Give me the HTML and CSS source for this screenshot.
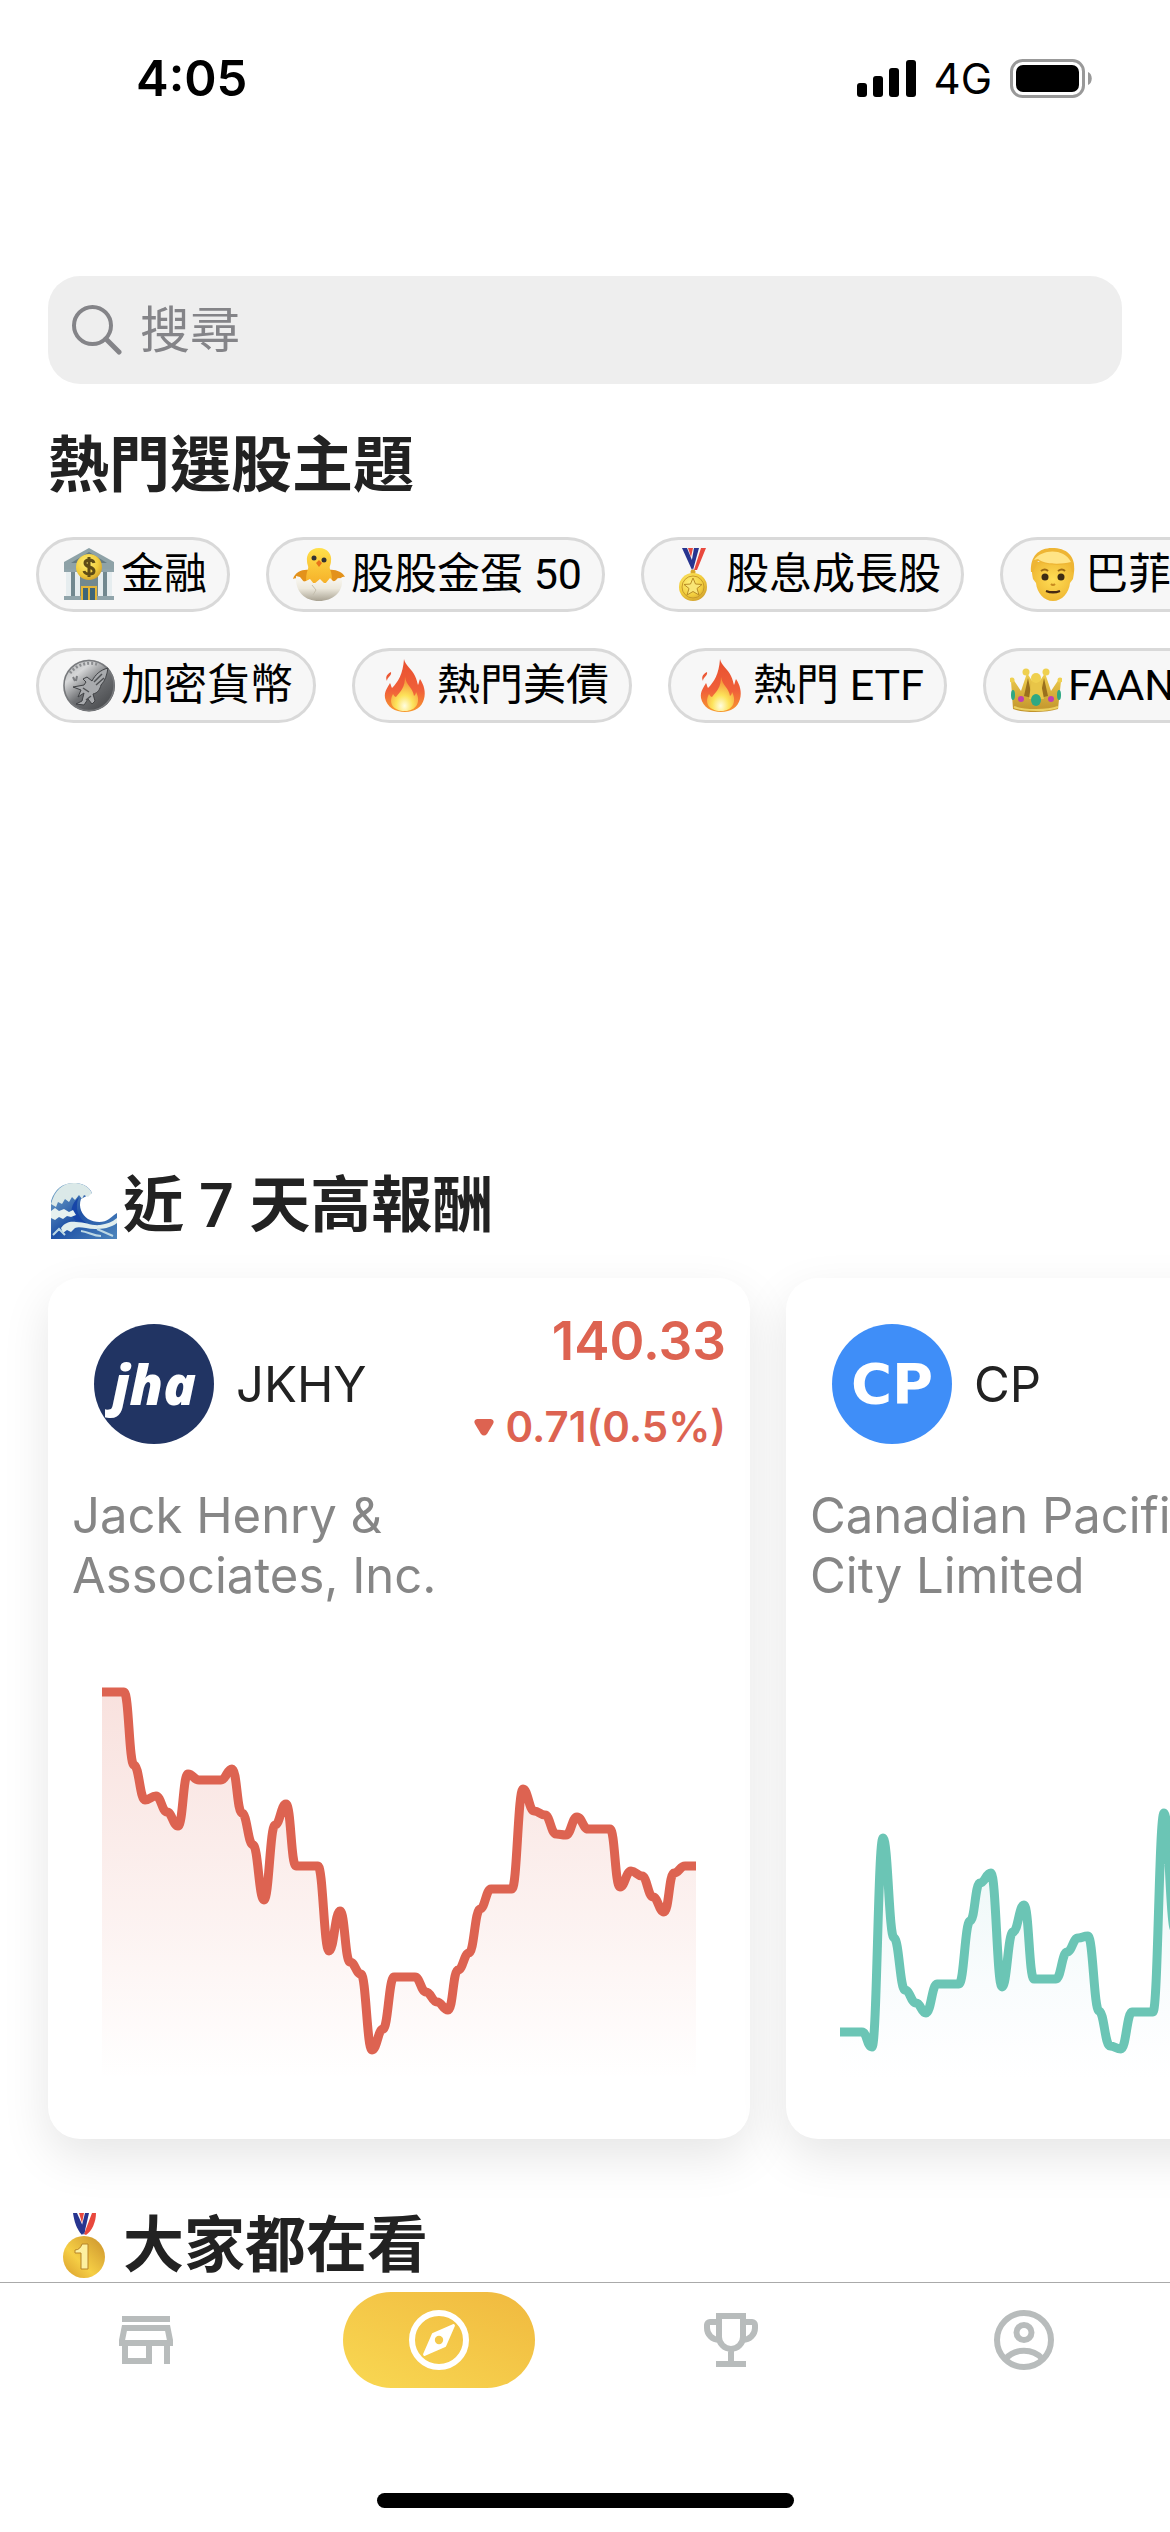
FILE: index.html
```html
<!DOCTYPE html>
<html lang="zh-Hant">
<head>
<meta charset="utf-8">
<meta name="viewport" content="width=device-width, initial-scale=1">
<title>探索</title>
<link rel="stylesheet" href="styles.css">
</head>
<body>
<svg class="defs" aria-hidden="true">
  <defs>
    <linearGradient id="flameOuter" x1="0" y1="0" x2="0" y2="1"><stop offset="0" stop-color="#e8502f"/><stop offset=".6" stop-color="#f0603a"/><stop offset="1" stop-color="#f79a2e"/></linearGradient>
    <radialGradient id="flameInner" cx=".5" cy=".85" r=".7"><stop offset="0" stop-color="#fffde0"/><stop offset=".45" stop-color="#fde35a"/><stop offset="1" stop-color="#f59a3c"/></radialGradient>
    <radialGradient id="gold" cx=".4" cy=".35" r=".75"><stop offset="0" stop-color="#fff07a"/><stop offset=".6" stop-color="#f2cd3c"/><stop offset="1" stop-color="#c9962a"/></radialGradient>
    <linearGradient id="medalGold" x1="0" y1="1" x2="1" y2="0"><stop offset="0" stop-color="#d79a2b"/><stop offset=".4" stop-color="#f6cf45"/><stop offset="1" stop-color="#c98f2c"/></linearGradient>
    <linearGradient id="silver" x1="0" y1="0" x2=".8" y2="1"><stop offset="0" stop-color="#a9abad"/><stop offset=".3" stop-color="#d6d7d8"/><stop offset=".6" stop-color="#6d6f72"/><stop offset="1" stop-color="#46484b"/></linearGradient>
    <radialGradient id="face" cx=".5" cy=".45" r=".6"><stop offset="0" stop-color="#ffdd55"/><stop offset="1" stop-color="#eeb531"/></radialGradient>
    <linearGradient id="chick" x1="0" y1="0" x2="0" y2="1"><stop offset="0" stop-color="#ffe04a"/><stop offset="1" stop-color="#f6b12a"/></linearGradient>
    <linearGradient id="shell" x1="0" y1="0" x2="0" y2="1"><stop offset="0" stop-color="#fbfaf5"/><stop offset=".5" stop-color="#ece8dc"/><stop offset="1" stop-color="#a9a393"/></linearGradient>
    <linearGradient id="crownGold" x1="0" y1="0" x2="0" y2="1"><stop offset="0" stop-color="#f0cf4e"/><stop offset="1" stop-color="#c1932c"/></linearGradient>
    <linearGradient id="waveBlue" x1="0" y1="0" x2="1" y2="1"><stop offset="0" stop-color="#7fb0cc"/><stop offset=".5" stop-color="#1f52a6"/><stop offset="1" stop-color="#4d86bd"/></linearGradient>
    <linearGradient id="fallFill" x1="0" y1="0" x2="0" y2="1"><stop offset="0" stop-color="#dd6351" stop-opacity=".19"/><stop offset=".6" stop-color="#dd6351" stop-opacity=".08"/><stop offset="1" stop-color="#dd6351" stop-opacity="0"/></linearGradient>
    <linearGradient id="riseFill" x1="0" y1="0" x2="0" y2="1"><stop offset="0" stop-color="#6bc5b5" stop-opacity=".16"/><stop offset=".6" stop-color="#8ccbd6" stop-opacity=".06"/><stop offset="1" stop-color="#a0c8f0" stop-opacity="0"/></linearGradient>
    <symbol id="fire" viewBox="0 0 52 53">
      <path d="M25 0c1 6 8 10 11 17 2 4 2 6 3 9 1-2 1-4 2-6 4 6 6 13 4 20-2 8-9 13-19 13S8 48 6 39c-1-7 3-11 5-15 1 2 1 3 2 5 6-6 11-14 12-29zM12 13c1 4-4 5-4 9-2-4 0-7 4-9z" fill="url(#flameOuter)"/>
      <path d="M26 18c1 8 8 11 9 19 1-1 2-2 2-4 5 9 1 19-11 19S9 44 14 35c1 2 2 3 3 3 5-6 9-10 9-20z" fill="url(#flameInner)"/>
    </symbol>
  </defs>
</svg>

<header class="status">
  <time class="status-time">4:05</time>
  <div class="status-right">
    <svg class="signal" viewBox="0 0 59 37" aria-hidden="true"><rect y="23" width="10" height="14" rx="3"/><rect x="16" y="16" width="10" height="21" rx="3"/><rect x="32" y="8" width="10" height="29" rx="3"/><rect x="49" width="10" height="37" rx="3"/></svg>
    <span>4G</span>
    <svg class="battery" viewBox="0 0 82 39" aria-hidden="true"><rect x="1.5" y="1.5" width="72" height="36" rx="11" fill="none" stroke="#999" stroke-width="3"/><rect x="6" y="6" width="63" height="27" rx="7"/><path d="M78 13c5 2 5 11 0 13z" fill="#999"/></svg>
  </div>
</header>

<main class="content">
  <label class="search">
    <svg class="search-icon" viewBox="0 0 50 50" aria-hidden="true"><circle cx="20.500" cy="20.500" r="18.500" /><path d="M34 34l13 13"/></svg>
    <input type="search" placeholder="搜尋" aria-label="搜尋">
  </label>

  <section class="themes">
    <h2 class="heading">熱門選股主題</h2>
    <div class="chip-rows">
      <div class="chip-row">
        <button class="chip" type="button">
          <svg class="emoji" viewBox="0 0 52 53" aria-hidden="true"><path d="M26 0L51 14v8H1v-8z" fill="#8ea2a7"/><path d="M26 4l18 11H8z" fill="#667b81"/><rect x="3" y="22" width="46" height="27" fill="#71888f"/><path d="M3 23h5v26H3zM12 23h5v26h-5zM35 23h5v26h-5zM44 23h5v26h-5z" fill="#e6edef"/><path d="M1 21h50v3H1zM1 48h50v4H1z" fill="#90a4aa"/><rect x="18" y="38" width="16" height="14" fill="#e2b53a"/><path d="M20 40h5v12h-5zM27 40h5v12h-5z" fill="#3e6578"/><circle cx="26" cy="19" r="13" fill="url(#gold)"/><path d="M31 15c-1-4-9-4-9 0 0 5 9 3 9 8 0 4-9 4-10 0M26 9v20" fill="none" stroke="#5f4c16" stroke-width="3"/></svg>
          <span>金融</span></button>
        <button class="chip" type="button">
          <svg class="emoji" viewBox="0 0 52 53" aria-hidden="true"><path d="M16 22C10 21 2 24 0 31c4-2 3 1 6 0 2 3 8 3 12 2zM36 22c6-1 14 2 16 7-4-1-3 2-6 1-2 4-8 4-12 3z" fill="#e3921b"/><path d="M26 0c9 0 13 7 12 13 0 4-2 5-1 8 2 5 2 9 2 14H13c0-5 0-9 2-14 1-3-1-4-1-8C13 7 17 0 26 0z" fill="url(#chick)"/><circle cx="21" cy="10" r="2.500" fill="#333"/><circle cx="31" cy="12" r="2.500" fill="#333"/><path d="M26 12l3 3-3 4-3-4z" fill="#e8731a"/><path d="M3 28l4 1 4 5 6-3 4 5 6-5 5 5 5-6 4 4 4-4 4 2c1 12-9 21-23 21S2 44 3 28z" fill="url(#shell)"/><path d="M19 37l4 5-3 5" fill="none" stroke="#c5bfae"/></svg>
          <span>股股金蛋 50</span></button>
        <button class="chip" type="button">
          <svg class="emoji" viewBox="0 0 52 53" aria-hidden="true"><path d="M14 0h5l7 17-2 5z" fill="#27348f"/><path d="M20 0h5l-2 9zM33 0h5l-9 22h-3z" fill="#e8483d"/><path d="M26 0h5l-6 22-2-5z" fill="#27348f"/><circle cx="25" cy="24" r="2.500" fill="#d9a92c"/><circle cx="25" cy="39" r="14" fill="url(#gold)"/><circle cx="25" cy="39" r="11" fill="none" stroke="#c79a2a"/><path d="M25 30l2.500 6 6.500.5-5 4 2 6.500-6-3.500-6 3.500 2-6.500-5-4 6.500-.5z" fill="#f9e676" stroke="#b98c25"/></svg>
          <span>股息成長股</span></button>
        <button class="chip" type="button">
          <svg class="emoji" viewBox="0 0 52 53" aria-hidden="true"><path d="M6 14c-2 6-1 12 0 17l3 4c1 10 8 18 17 18s16-8 17-18l3-4c1-5 2-11 0-17z" fill="url(#face)"/><path d="M4 24C3 8 12 0 25 0c14 0 24 7 22 24h-2l-2-9C32 19 16 16 11 13L6 24z" fill="#eeb534"/><path d="M7 12c8-11 30-12 37 2-12 3-28 2-33-3z" fill="#ffe486"/><path d="M14 23q4-3 7 0M31 23q4-3 7 0" fill="none" stroke="#9c6a16" stroke-width="2"/><circle cx="18" cy="29" r="3.500" fill="#3d2b14"/><circle cx="34" cy="29" r="3.500" fill="#3d2b14"/><path d="M24 36q2 2 4 0" fill="none" stroke="#c88b20" stroke-width="2"/><path d="M19 43q7 3 14 0" fill="#472a12" stroke="#472a12" stroke-width="2"/></svg>
          <span>巴菲特概念股</span></button>
      </div>
      <div class="chip-row">
        <button class="chip" type="button">
          <svg class="emoji" viewBox="0 0 52 53" aria-hidden="true"><circle cx="26" cy="26.500" r="26" fill="url(#silver)"/><circle cx="26" cy="26.500" r="25" fill="none" stroke="#77797c" stroke-width="1.500"/><path d="M7 14C14 5 27 2 36 6" fill="none" stroke="#8b8d90" stroke-width="3" stroke-dasharray="2 2"/><path d="M45 9c-8 2-13 7-16 13l-5-4-4 2 3 3-2 3-11 2 8 3-3 7 6-4-2 8-6 3 8 1 4-6 4 5 3-3-2-7c5-1 7-5 8-9 4-4 6-10 7-17z" fill="#a8aaad" stroke="#3f4144"/><path d="M31 23l8-8M33 26l8-7M20 29l6 4M23 41l5-4" stroke="#4f5154" stroke-width="1.500"/><path d="M10 18l2 4M14 17l-1 5" stroke="#7b7d80" stroke-width="2"/></svg>
          <span>加密貨幣</span></button>
        <button class="chip" type="button"><svg class="emoji" aria-hidden="true"><use href="#fire"/></svg><span>熱門美債</span></button>
        <button class="chip" type="button"><svg class="emoji" aria-hidden="true"><use href="#fire"/></svg><span>熱門 ETF</span></button>
        <button class="chip" type="button">
          <svg class="emoji" viewBox="0 0 52 53" aria-hidden="true"><path d="M3 50L1 22l2-2 8 12 6-18 9 14 9-14 6 18 8-12 2 2-3 28c-12 4-34 4-45 0z" fill="url(#crownGold)"/><path d="M18 19l-4 18 8 2zM34 19l4 18-8 2z" fill="#9a701d"/><path d="M19 40l3-21h8l4 21z" fill="#e8c548"/><g fill="#efd04f"><circle cx="26" cy="19" r="5"/><circle cx="16" cy="13" r="3.500"/><circle cx="36" cy="13" r="3.500"/><circle cx="2" cy="21" r="2.500"/><circle cx="50" cy="21" r="2.500"/></g><ellipse cx="26" cy="41" rx="5" ry="6" fill="#2fa882"/><g fill="#c03fae"><circle cx="11" cy="40" r="3"/><circle cx="41" cy="40" r="3"/></g><g fill="#2fa882"><ellipse cx="3" cy="36" rx="2" ry="5"/><ellipse cx="49" cy="36" rx="2" ry="5"/></g><path d="M4 48c10 4 34 4 44 0" fill="none" stroke="#ecd161" stroke-width="2"/></svg>
          <span>FAANG</span></button>
      </div>
    </div>
  </section>

  <section class="returns">
    <h2 class="heading">
      <svg class="heading-emoji" viewBox="0 0 66 66" aria-hidden="true"><path d="M0 66V28C4 15 13 9 25 10c9 1 14 5 16 10l-11 6c-3 8 1 16 7 20 7 4 16 4 21 0 4-3 6-5 8-6v26z" fill="url(#waveBlue)"/><path d="M0 31C4 16 13 9 25 10c8 1 13 4 16 10l-4 4-4-2-2 4-3-4-4 5-3-3-3 5-4-3-3 5-4-2-2 5z" fill="#dbe9e8"/><path d="M28 24c-5 11-1 22 9 27l-13-4C18 40 20 31 28 24z" fill="#1746a8"/><path d="M0 38l4-3 4 3 5-2 5 3 4-2 3 5-5 2-4-1-4 3-4-2-4 3-4-2z" fill="#e6f1f0"/><path d="M10 55c4-6 10-7 15-6 9 0 16 4 24 3 7-1 12-3 17-7v5c-6 5-15 6-22 6-9 0-15-3-20-1l-4 4-4-2-4 3z" fill="#e1eeee"/><path d="M30 58c8 1 12 5 20 5M46 56l16 7M2 62l6-6 6 6" fill="none" stroke="#bcd8e4" stroke-width="2"/></svg>
      <span>近 7 天高報酬</span></h2>
    <div class="cards">
      <article class="card">
        <div class="card-top">
          <span class="logo logo-jha">jha</span>
          <h3 class="ticker">JKHY</h3>
          <div class="quote"><div class="price">140.33</div><div class="change"><svg class="down" viewBox="0 0 20 17" aria-hidden="true"><path d="M3 0h14q4 1 2 5l-6 10q-3 3-6 0L1 5q-2-4 2-5z"/></svg><span>0.71(0.5%)</span></div></div>
        </div>
        <p class="company">Jack Henry &amp;<br>Associates, Inc.</p>
        <svg class="chart fall" viewBox="0 0 594 400" role="img" aria-label="JKHY 七日走勢">
          <path class="area" fill="url(#fallFill)" d="M0 12H22C27 12 27 85 32 85S38 120 43 120 49 116 54 116 60 132 65 132 71 146 76 146 81 94 86 94 92 100 97 100H119C124 100 125 89 130 89S135 133 140 133 146 165 151 165 157 220 162 220 168 145 173 145 179 124 184 124 189 186 194 186H216C221 186 222 271 227 271S233 231 238 231 243 282 248 282 254 294 259 294 265 370 270 370 276 349 281 349 287 297 292 297H313C318 297 319 312 324 312S330 322 335 322 341 330 346 330 351 290 356 290 362 273 367 273 373 229 378 229 384 209 389 209H410C415 209 416 109 421 109S427 131 432 131 438 135 443 135 449 154 454 154 459 155 464 155 470 137 475 137 481 149 486 149H508C513 149 513 207 518 207S524 191 529 191 535 196 540 196 546 217 551 217 557 232 562 232 567 193 572 193 578 186 583 186H594V400H0z"/>
          <path class="line" d="M0 12H22C27 12 27 85 32 85S38 120 43 120 49 116 54 116 60 132 65 132 71 146 76 146 81 94 86 94 92 100 97 100H119C124 100 125 89 130 89S135 133 140 133 146 165 151 165 157 220 162 220 168 145 173 145 179 124 184 124 189 186 194 186H216C221 186 222 271 227 271S233 231 238 231 243 282 248 282 254 294 259 294 265 370 270 370 276 349 281 349 287 297 292 297H313C318 297 319 312 324 312S330 322 335 322 341 330 346 330 351 290 356 290 362 273 367 273 373 229 378 229 384 209 389 209H410C415 209 416 109 421 109S427 131 432 131 438 135 443 135 449 154 454 154 459 155 464 155 470 137 475 137 481 149 486 149H508C513 149 513 207 518 207S524 191 529 191 535 196 540 196 546 217 551 217 557 232 562 232 567 193 572 193 578 186 583 186H594"/>
        </svg>
      </article>
      <article class="card">
        <div class="card-top">
          <span class="logo logo-cp">CP</span>
          <h3 class="ticker">CP</h3>
        </div>
        <p class="company">Canadian Pacific Kansas<br>City Limited</p>
        <svg class="chart rise" viewBox="0 0 594 400" role="img" aria-label="CP 七日走勢">
          <path class="area" fill="url(#riseFill)" d="M0 352H22C27 352 27 367 32 367S38 158 43 158 49 258 54 258 60 310 65 310 71 323 76 323 81 333 86 333 92 304 97 304H119C124 304 125 241 130 241S135 203 140 203 146 193 151 193 157 307 162 307 168 252 173 252 179 225 184 225 189 299 194 299H216C221 299 222 272 227 272S233 258 238 258 243 256 248 256 254 331 259 331 265 366 270 366 276 369 281 369 287 332 292 332H313C318 332 319 133 324 133S330 250 335 250 341 262 346 262H594V400H0z"/>
          <path class="line" d="M0 352H22C27 352 27 367 32 367S38 158 43 158 49 258 54 258 60 310 65 310 71 323 76 323 81 333 86 333 92 304 97 304H119C124 304 125 241 130 241S135 203 140 203 146 193 151 193 157 307 162 307 168 252 173 252 179 225 184 225 189 299 194 299H216C221 299 222 272 227 272S233 258 238 258 243 256 248 256 254 331 259 331 265 366 270 366 276 369 281 369 287 332 292 332H313C318 332 319 133 324 133S330 250 335 250 341 262 346 262H594"/>
        </svg>
      </article>
    </div>
  </section>

  <section class="popular">
    <h2 class="heading">
      <svg class="heading-emoji" viewBox="0 0 66 66" aria-hidden="true"><path d="M22 0h4l8 18-3 4c-5-5-8-14-9-22z" fill="#27348f"/><path d="M28 0h5l-2 10zM41 0h4c0 9-4 18-10 22l-2-1z" fill="#e8483d"/><path d="M34 0h4l-5 22-3-6z" fill="#27348f"/><circle cx="33" cy="44" r="21" fill="url(#medalGold)"/><path d="M24 37c4 0 6-3 7-6h6v25h-7V40h-6z" fill="#fdf0a0" stroke="#b78428" stroke-width="1"/></svg>
      <span>大家都在看</span></h2>
  </section>
</main>

<nav class="tabs" aria-label="主選單">
  <ul class="tab-list">
    <li><a class="tab" href="#market" aria-label="市場"><svg viewBox="0 0 24 24"><path fill="currentColor" d="M18.360 9l.6 3H5.040l.6-3h12.720M20 4H4v2h16V4zm0 3H4l-1 5v2h1v6h10v-6h4v6h2v-6h1v-2l-1-5zM6 18v-4h6v4H6z"/></svg></a></li>
    <li><a class="tab active" href="#explore" aria-label="探索" aria-current="page"><svg viewBox="0 0 24 24"><circle cx="12" cy="12" r="9" fill="none" stroke="currentColor" stroke-width="2"/><path d="M16.800 7.200L13.900 13.900 7.200 16.800 10.100 10.100z" fill="currentColor" stroke="currentColor" stroke-linejoin="round"/><circle cx="12" cy="12" r="1.400" fill="#f4c94b"/></svg></a></li>
    <li><a class="tab" href="#ranking" aria-label="排行"><svg viewBox="0 0 24 24" fill="none" stroke="currentColor" stroke-width="2"><path d="M8 4h8v7a4 4 0 0 1-8 0zM8 6H5a1 1 0 0 0-1 1v1a4 4 0 0 0 4 4M16 6h3a1 1 0 0 1 1 1v1a4 4 0 0 1-4 4M12 15v5M7 20h10"/></svg></a></li>
    <li><a class="tab" href="#account" aria-label="帳戶"><svg viewBox="0 0 24 24" fill="none" stroke="currentColor" stroke-width="2"><circle cx="12" cy="12" r="9"/><circle cx="12" cy="9.500" r="2.500"/><path d="M6 18.200C7.500 16.500 9.600 15.600 12 15.600s4.500.9 6 2.600"/></svg></a></li>
  </ul>
  <div class="home-indicator"></div>
</nav>
</body>
</html>
```
FILE: styles.css
```css
* { box-sizing: border-box; }

body {
  margin: 0;
  height: 100vh;
  display: flex;
  flex-direction: column;
  overflow: hidden;
  background: #fff;
  color: #222;
  font-family: Inter, "Noto Sans CJK TC", sans-serif;
}

h2, h3, p, ul { margin: 0; padding: 0; }

.defs { position: absolute; width: 0; height: 0; }

/* Status bar */
.status {
  flex: none;
  height: 156px;
  padding: 0 78px 0 136px;
  display: flex;
  align-items: center;
  justify-content: space-between;
  color: #000;
}
.status-time { font-size: 49px; font-weight: 600; }
.status-right { display: flex; align-items: center; gap: 18px; font-size: 42px; }
.signal { width: 59px; height: 37px; }
.battery { width: 82px; height: 39px; }

.content {
  flex: 1;
  min-height: 0;
  overflow: hidden;
  padding-top: 120px;
}

/* Search */
.search {
  margin: 0 48px;
  height: 108px;
  padding: 0 24px;
  border-radius: 32px;
  background: #eee;
  display: flex;
  align-items: center;
  gap: 18px;
}
.search-icon {
  flex: none;
  width: 50px;
  height: 50px;
  fill: none;
  stroke: #848488;
  stroke-width: 4;
  stroke-linecap: round;
}
.search-icon path { stroke-width: 5; }
.search input {
  flex: 1;
  min-width: 0;
  padding: 0;
  border: 0;
  outline: 0;
  background: none;
  appearance: none;
  font: 50px/72px Inter, "Noto Sans CJK TC", sans-serif;
  color: #222;
}
.search input::placeholder { color: #848488; opacity: 1; }

/* Sections */
.heading {
  padding: 0 48px;
  display: flex;
  align-items: center;
  gap: 6px;
  font-family: Roboto, "Noto Sans CJK TC", sans-serif;
  font-size: 61px;
  line-height: 84px;
  font-weight: 600;
  white-space: nowrap;
}
.heading-emoji { flex: none; width: 66px; height: 66px; margin-left: 3px; }

.themes { margin-top: 40px; }
.chip-rows {
  margin-top: 29px;
  padding: 0 36px;
  display: flex;
  flex-direction: column;
  gap: 36px;
}
.chip-row { display: flex; gap: 36px; }
.chip {
  flex: none;
  padding: 0 20px 0 24px;
  display: flex;
  align-items: center;
  gap: 6px;
  border: 3px solid #d9d9d9;
  border-radius: 38px;
  background: #f7f7f7;
  color: #000;
  font: 43px/69px Roboto, "Noto Sans CJK TC", sans-serif;
  white-space: nowrap;
}
.emoji { flex: none; width: 52px; height: 53px; }

/* Cards */
.returns { margin-top: 441px; }
.cards {
  padding: 30px 48px 65px;
  display: flex;
  gap: 36px;
  overflow: hidden;
}
.card {
  flex: 0 0 60vw;
  padding: 33px 24px 59px;
  border-radius: 32px;
  background: #fff;
  box-shadow: 0 18px 48px rgba(0, 0, 0, .1);
}
.card-top {
  height: 146px;
  padding-left: 22px;
  display: flex;
  align-items: center;
}
.logo {
  flex: none;
  width: 120px;
  height: 120px;
  border-radius: 50%;
  color: #fff;
  text-align: center;
  line-height: 120px;
}
.logo-jha {
  background: #213463;
  font-family: "Open Sans", sans-serif;
  font-size: 54px;
  font-weight: 800;
  font-style: italic;
}
.logo-cp {
  background: #3f8ef8;
  font-family: "DejaVu Sans", sans-serif;
  font-size: 56px;
  font-weight: 700;
}
.ticker { margin-left: 22px; font-size: 49px; font-weight: 400; }
.quote {
  margin-left: auto;
  display: flex;
  flex-direction: column;
  align-items: flex-end;
  gap: 26px;
  color: #dd6351;
  font-weight: 600;
  line-height: 60px;
}
.price { font-size: 53px; }
.change { display: flex; align-items: center; gap: 12px; font-size: 42px; }
.down { width: 20px; height: 17px; fill: currentColor; }
.company {
  margin-top: 29px;
  font-size: 49px;
  line-height: 60px;
  color: #868686;
  white-space: nowrap;
}
.chart { display: block; width: auto; margin: 74px 30px 0; }
.chart .line { fill: none; stroke-width: 9; stroke-linejoin: round; }
.fall .line { stroke: #dd6351; }
.rise .line { stroke: #6bc5b5; }

/* Tab bar */
.tabs {
  flex: none;
  padding: 9px 0 24px;
  border-top: 1px solid #aaa;
  background: #fff;
}
.tab-list { display: grid; grid-template-columns: repeat(4, 1fr); list-style: none; }
.tab {
  width: 192px;
  height: 96px;
  margin: 0 auto;
  border-radius: 48px;
  display: flex;
  align-items: center;
  justify-content: center;
  color: #b8bcbc;
}
.tab svg { width: 72px; height: 72px; }
.tab.active { background: linear-gradient(25deg, #f9d852, #f0b93f); color: #fff; }
.home-indicator {
  width: 417px;
  height: 15px;
  margin: 105px auto 0;
  border-radius: 8px;
  background: #000;
}
```
